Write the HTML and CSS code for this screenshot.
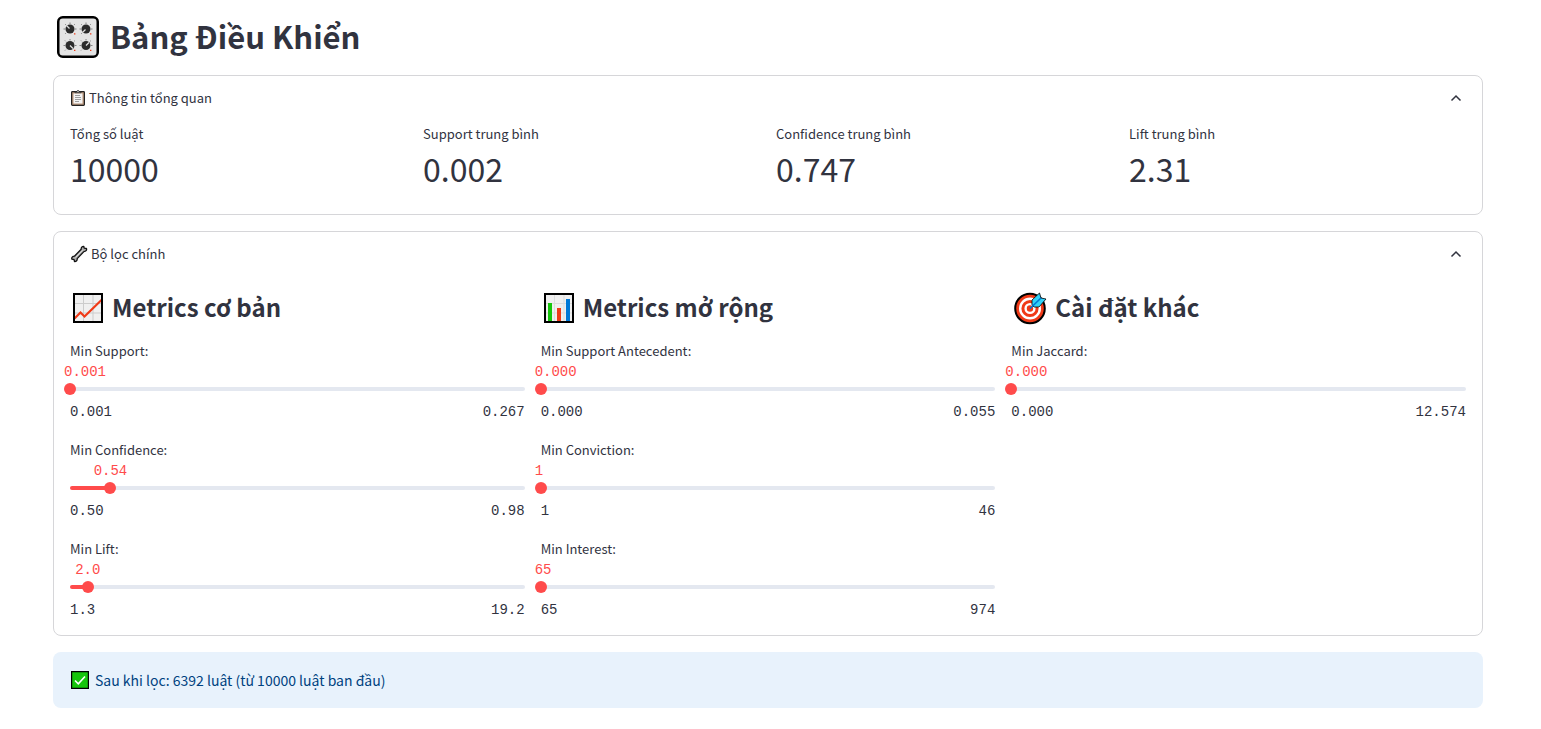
FILE: index.html
```html
<!DOCTYPE html>
<html lang="vi">
<head>
<meta charset="utf-8">
<meta name="viewport" content="width=device-width, initial-scale=1">
<title>Bảng Điều Khiển</title>
<link rel="stylesheet" href="styles.css">
</head>
<body>
<svg width="0" height="0" class="defs" aria-hidden="true">
  <defs>
    <g id="knob">
      <path d="M-6.500 0h1.500M5 0h1.500M0-6.500v1.500M-5-5l.8.8M5-5l-.8.8M-5 5l.8-.8" stroke="#777" stroke-width=".9"/>
      <path d="M4 4.200h1.400v1.400H4z" fill="#f03a17"/>
      <circle r="4.500" fill="#2b2b2b"/>
    </g>
  </defs>
</svg>
<main class="page">
  <h1 class="title">
    <svg class="icon-title" viewBox="0 0 42 42" aria-hidden="true">
      <rect x="1.250" y="1.250" width="39.500" height="39.500" rx="4.500" fill="#e4e4e4" stroke="#000" stroke-width="2.500"/>
      <use href="#knob" x="13" y="13"/><use href="#knob" x="29" y="13"/>
      <use href="#knob" x="13" y="29.500"/><use href="#knob" x="29" y="29.500"/>
      <path d="M12.500 12.500l-3-3M28.500 13.500l-3 3M13 29.500l3 3M29 29.500l3-3" stroke="#ddd" stroke-width="1.300"/>
    </svg>
    <span>Bảng Điều Khiển</span>
  </h1>

  <details class="card" open>
    <summary class="card-head">
      <svg class="icon-clip" viewBox="0 0 16 16" aria-hidden="true">
        <rect x="1.600" y="1.700" width="12.800" height="13.700" rx=".8" fill="#b9967c" stroke="#222" stroke-width="1.200"/>
        <path d="M3.500 3.500h9v10h-9z" fill="#f4f4f4"/>
        <path d="M5 2.700V1.500h2a1 1 0 0 1 2 0h2v1.200z" fill="#ddd" stroke="#222" stroke-width=".9"/>
        <path d="M5 5.500h5M5 7.500h6M5 9.500h6M5 11.500h4" stroke="#888" stroke-width=".8"/>
      </svg>
      <span class="card-name">Thông tin tổng quan</span>
      <svg class="chevron" viewBox="0 0 20 20" aria-hidden="true"><path d="M5.500 12.500 10 8l4.500 4.500"/></svg>
    </summary>
    <dl class="metrics">
      <div><dt>Tổng số luật</dt><dd>10000</dd></div>
      <div><dt>Support trung bình</dt><dd>0.002</dd></div>
      <div><dt>Confidence trung bình</dt><dd>0.747</dd></div>
      <div><dt>Lift trung bình</dt><dd>2.31</dd></div>
    </dl>
  </details>

  <details class="card" open>
    <summary class="card-head">
      <svg class="icon-wrench" viewBox="0 0 18 18" aria-hidden="true">
        <path d="M11.200 4.200c-.2-1.700.8-3 2.600-2.900l.4 1.900 2.200.3c.7 1.700-.6 3.100-2.500 3.100L7.200 13.600c.2 1.700-.9 3-2.700 2.900l-.4-1.900-2.200-.4c-.6-1.700.6-3 2.500-3z" fill="#aaa" stroke="#111" stroke-width="1.300" stroke-linejoin="round"/>
        <path d="M5.500 12.500 12.700 5.200" stroke="#ddd" stroke-width="1"/>
      </svg>
      <span class="card-name">Bộ lọc chính</span>
      <svg class="chevron" viewBox="0 0 20 20" aria-hidden="true"><path d="M5.500 12.500 10 8l4.500 4.500"/></svg>
    </summary>
    <div class="filters">
      <section class="column">
        <h2 class="heading">
          <svg class="icon-chart" viewBox="0 0 32 32" aria-hidden="true">
            <path d="M2 2h28v28H2z" fill="#f0f0f0"/>
            <path d="M11.500 2v28M21 2v28M2 11.500h28M2 21h28" stroke="#ccc"/>
            <path d="M2.500 26.500l6-6 4 4L30 7.500" fill="none" stroke="#f03a17" stroke-width="2.200"/>
            <path d="M2 2h28v28H2z" fill="none" stroke="#000" stroke-width="2"/>
          </svg>
          <span>Metrics cơ bản</span>
        </h2>
        <div class="slider" style="--pos:0%;--chars:5">
          <label for="support">Min Support:</label>
          <output for="support">0.001</output>
          <div class="track"><span class="rail"></span><input id="support" type="range" min="0.001" max="0.267" step="0.001" value="0.001"></div>
          <div class="ends"><span>0.001</span><span>0.267</span></div>
        </div>
        <div class="slider" style="--pos:8.9%;--chars:4">
          <label for="confidence">Min Confidence:</label>
          <output for="confidence">0.54</output>
          <div class="track"><span class="rail"></span><input id="confidence" type="range" min="0" max="1000" value="89"></div>
          <div class="ends"><span>0.50</span><span>0.98</span></div>
        </div>
        <div class="slider" style="--pos:3.9%;--chars:3">
          <label for="lift">Min Lift:</label>
          <output for="lift">2.0</output>
          <div class="track"><span class="rail"></span><input id="lift" type="range" min="0" max="1000" value="39"></div>
          <div class="ends"><span>1.3</span><span>19.2</span></div>
        </div>
      </section>
      <section class="column">
        <h2 class="heading">
          <svg class="icon-chart" viewBox="0 0 32 32" aria-hidden="true">
            <path d="M2 2h28v28H2z" fill="#f0f0f0"/>
            <path d="M11.500 2v28M21 2v28M2 11.500h28M2 21h28" stroke="#ddd"/>
            <path d="M5 11h4v19H5z" fill="#16c60c"/><path d="M14 16h4v14h-4z" fill="#f03a17"/><path d="M23 7h4v23h-4z" fill="#0078d7"/>
            <path d="M2 2h28v28H2z" fill="none" stroke="#000" stroke-width="2"/>
          </svg>
          <span>Metrics mở rộng</span>
        </h2>
        <div class="slider" style="--pos:0%;--chars:5">
          <label for="antecedent">Min Support Antecedent:</label>
          <output for="antecedent">0.000</output>
          <div class="track"><span class="rail"></span><input id="antecedent" type="range" min="0" max="0.055" step="0.001" value="0"></div>
          <div class="ends"><span>0.000</span><span>0.055</span></div>
        </div>
        <div class="slider" style="--pos:0%;--chars:2">
          <label for="conviction">Min Conviction:</label>
          <output for="conviction">1</output>
          <div class="track"><span class="rail"></span><input id="conviction" type="range" min="1" max="46" value="1"></div>
          <div class="ends"><span>1</span><span>46</span></div>
        </div>
        <div class="slider" style="--pos:0%;--chars:2">
          <label for="interest">Min Interest:</label>
          <output for="interest">65</output>
          <div class="track"><span class="rail"></span><input id="interest" type="range" min="65" max="974" value="65"></div>
          <div class="ends"><span>65</span><span>974</span></div>
        </div>
      </section>
      <section class="column">
        <h2 class="heading">
          <svg class="icon-target" viewBox="0 0 34 34" aria-hidden="true">
            <circle cx="17" cy="17.500" r="14.800" fill="#f03a17" stroke="#000" stroke-width="2"/>
            <circle cx="17" cy="17.500" r="9.800" fill="none" stroke="#fff" stroke-width="2.400"/>
            <circle cx="17" cy="17.500" r="4.400" fill="none" stroke="#fff" stroke-width="2.400"/>
            <path d="M19 14V9l7.500-7 1.500 5 5 1-7 8h-5z" fill="#31d2f7" stroke="#000" stroke-width=".8" stroke-linejoin="round"/>
            <path d="M17 17.500 28 7" stroke="#0078d7" stroke-width="1.600"/>
          </svg>
          <span>Cài đặt khác</span>
        </h2>
        <div class="slider" style="--pos:0%;--chars:5">
          <label for="jaccard">Min Jaccard:</label>
          <output for="jaccard">0.000</output>
          <div class="track"><span class="rail"></span><input id="jaccard" type="range" min="0" max="12.574" step="0.001" value="0"></div>
          <div class="ends"><span>0.000</span><span>12.574</span></div>
        </div>
      </section>
    </div>
  </details>

  <div class="notice" role="status">
    <svg class="icon-check" viewBox="0 0 18 18" aria-hidden="true">
      <path d="M.6.6h16.800v16.800H.6z" fill="#16c60c" stroke="#000" stroke-width="1.200"/>
      <path d="M4 9.500l3.300 3.300L14 5.500" fill="none" stroke="#fff" stroke-width="1.600"/>
    </svg>
    <span>Sau khi lọc: 6392 luật (từ 10000 luật ban đầu)</span>
  </div>
</main>
</body>
</html>
```
FILE: styles.css
```css
* { box-sizing: border-box; }

body {
  margin: 0;
  background: #fff;
  color: #31333f;
  font: 400 13px/20px "Noto Sans CJK SC", "Noto Sans", sans-serif;
}

.defs { position: absolute; }
svg { flex: none; display: block; }

.page {
  display: flex;
  flex-direction: column;
  gap: 16px;
  padding: 15px 58px 20px 53px;
}

.title, .heading {
  display: flex;
  align-items: center;
  font-weight: 700;
}
.title span, .heading span { padding-bottom: 2px; }

.title {
  gap: 11px;
  margin: 0;
  padding-left: 4px;
  font-size: 31px;
  line-height: 42px;
}
.icon-title { width: 42px; height: 42px; }

.card {
  border: 1px solid #d6d6d9;
  border-radius: 8px;
}
.card-head {
  display: flex;
  align-items: center;
  gap: 3px;
  height: 44px;
  padding: 0 16px;
  list-style: none;
  cursor: pointer;
}
.card-head::-webkit-details-marker { display: none; }
.card-name { flex: 1; }
.icon-clip { width: 16px; height: 16px; }
.icon-wrench { width: 18px; height: 18px; }
.chevron {
  width: 20px;
  height: 20px;
  fill: none;
  stroke: #31333f;
  stroke-width: 1.5;
}

.metrics {
  display: grid;
  grid-template-columns: repeat(4, 1fr);
  gap: 16px;
  margin: 0;
  padding: 4px 16px 26px;
}
.metrics dt { margin-bottom: 4px; }
.metrics dd {
  margin: 0;
  font-size: 32px;
  line-height: 40px;
}

.filters {
  display: grid;
  grid-template-columns: repeat(3, 1fr);
  gap: 16px;
  padding: 8px 16px 15px;
}
.column {
  display: flex;
  flex-direction: column;
  gap: 18px;
}
.heading {
  gap: 8px;
  margin: 0 0 -9px;
  padding-left: 2px;
  font-size: 24px;
  line-height: 46px;
}
.icon-chart { width: 32px; height: 32px; }
.icon-target { width: 34px; height: 34px; }

.slider {
  display: flex;
  flex-direction: column;
}
.slider label { margin-bottom: 1px; }
.slider output, .ends {
  font-family: "Liberation Mono", monospace;
  font-size: 14px;
}
.slider output {
  margin-left: max(-6px, calc(var(--pos) - var(--chars) * 0.5ch));
  color: #ff4b4b;
}
.track {
  display: grid;
  align-items: center;
  height: 14px;
}
.rail, .track input { grid-area: 1 / 1; }
.rail {
  height: 4px;
  border-radius: 2px;
  background: linear-gradient(to right, #ff4b4b var(--pos), #e4e8f0 var(--pos));
}
.track input {
  appearance: none;
  width: calc(100% + 12px);
  height: 12px;
  margin: 0 -6px;
  background: transparent;
  cursor: pointer;
}
.track input::-webkit-slider-thumb {
  appearance: none;
  width: 12px;
  height: 12px;
  border: 0;
  border-radius: 50%;
  background: #ff4b4b;
}
.ends {
  display: flex;
  justify-content: space-between;
  padding-top: 6px;
}

.notice {
  display: flex;
  align-items: center;
  gap: 6px;
  padding: 16px 18px;
  border-radius: 8px;
  background: #e8f2fc;
  color: #004280;
  font-size: 14px;
  line-height: 24px;
}
.icon-check { width: 18px; height: 18px; }
```
